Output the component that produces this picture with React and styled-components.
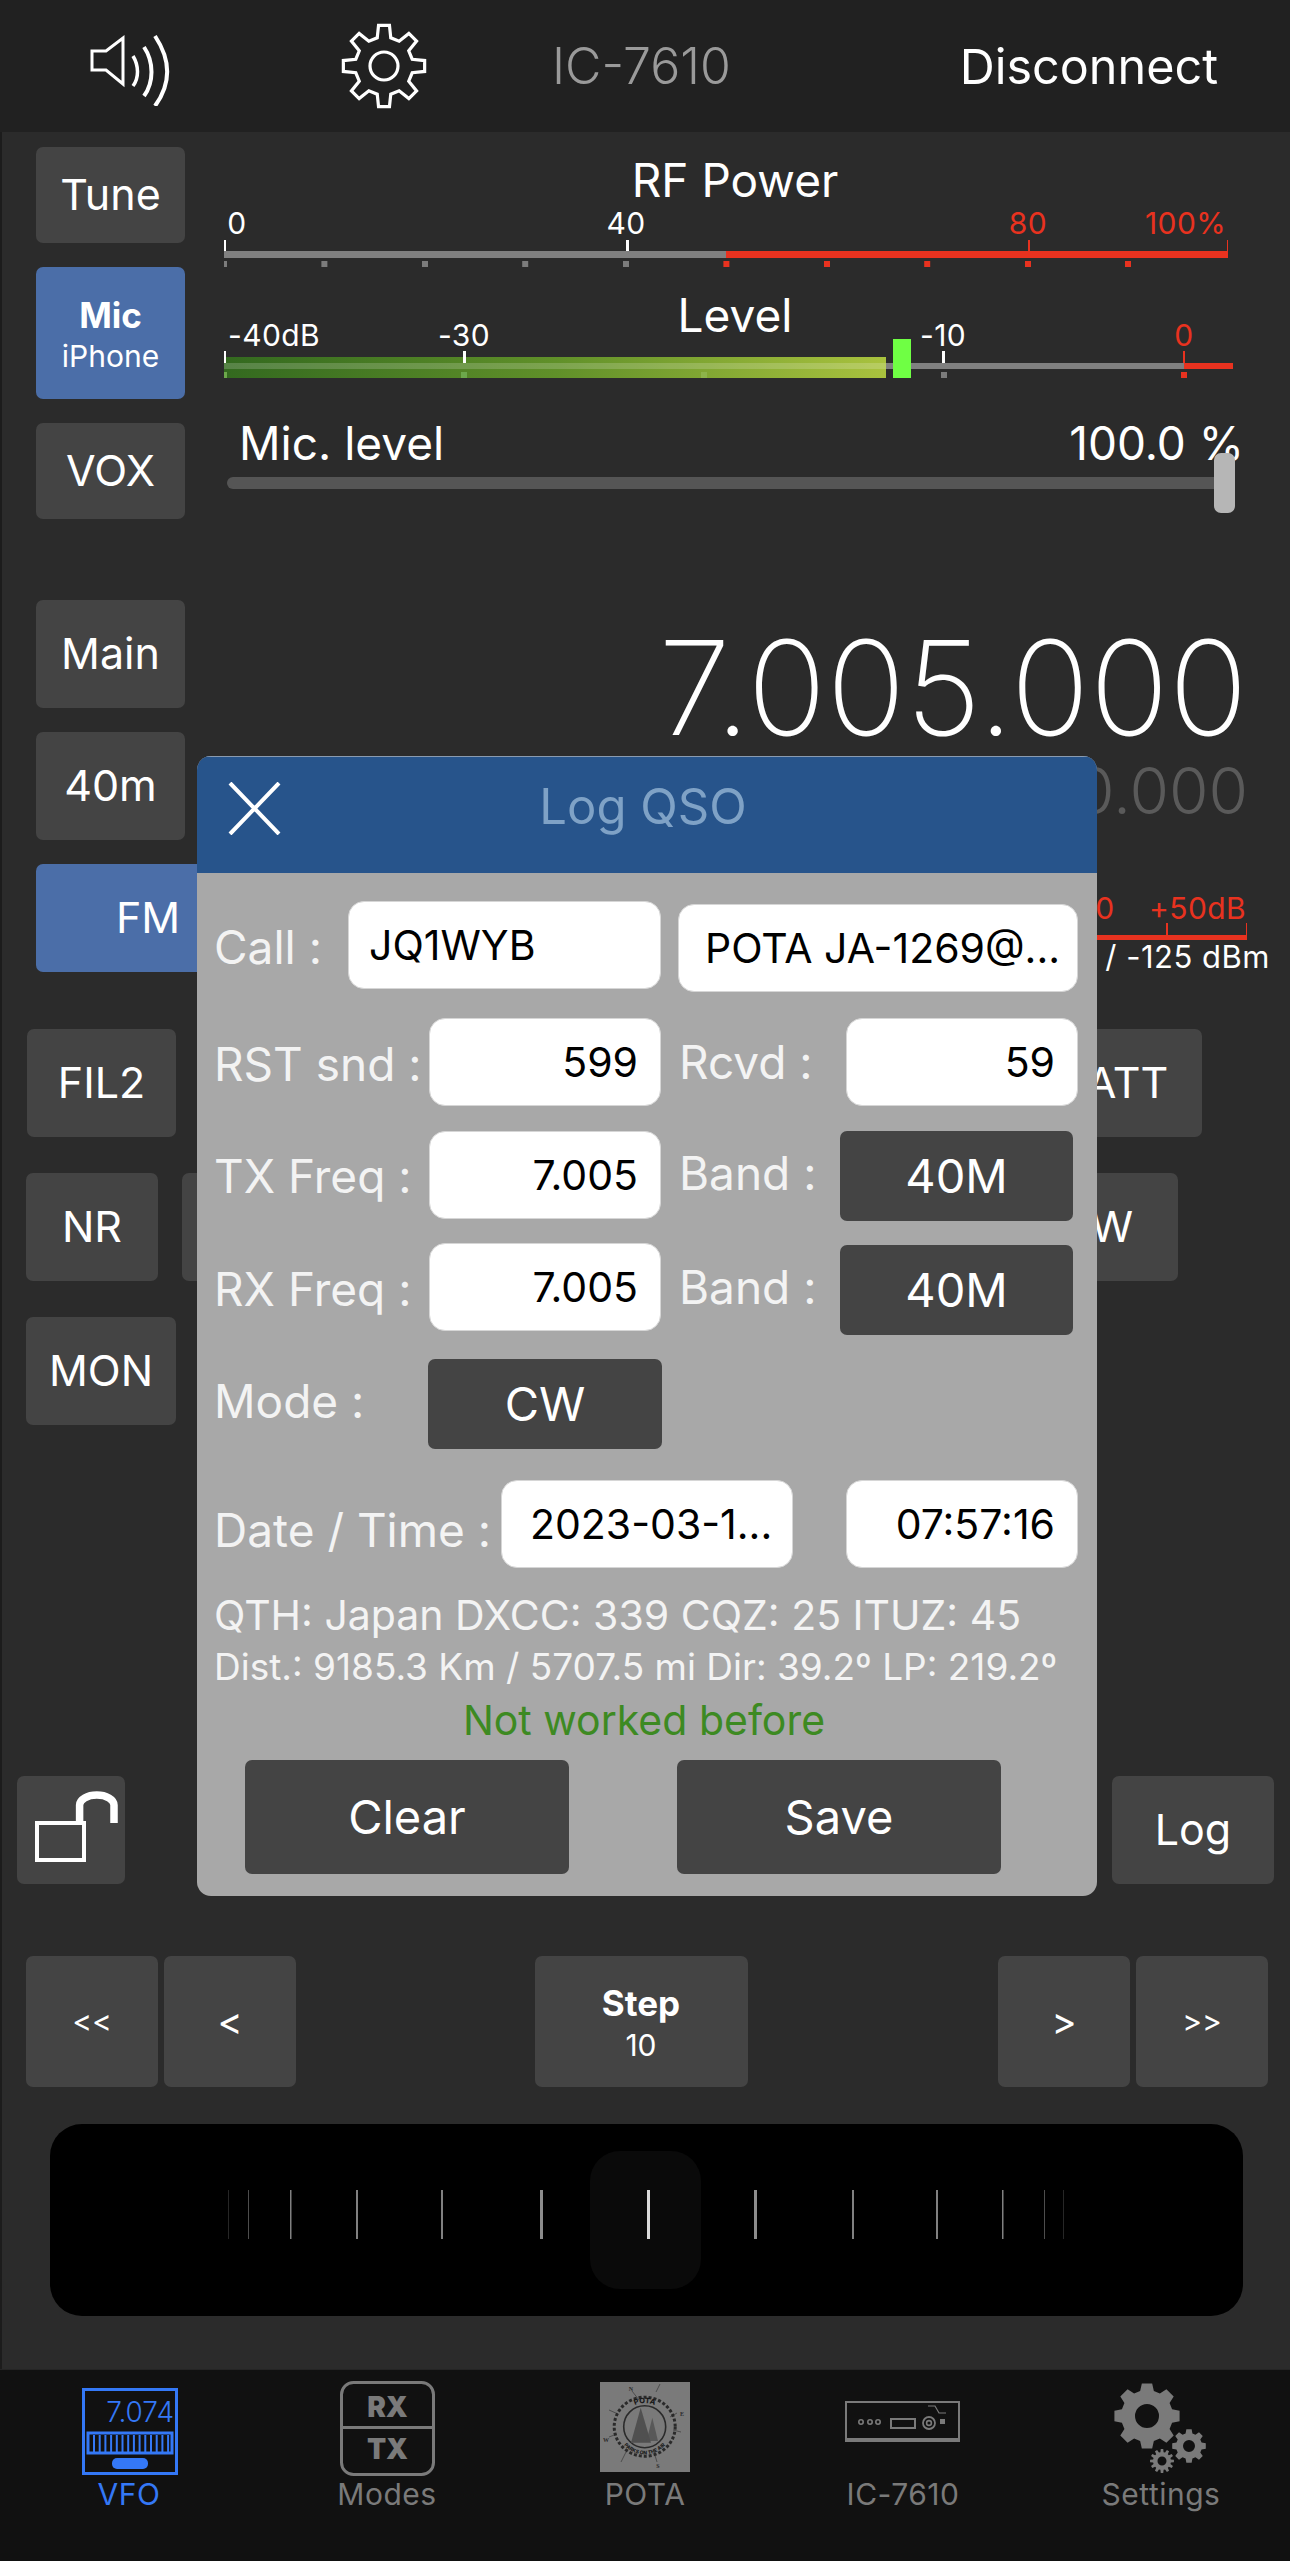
import React from "react";
import styled, { createGlobalStyle } from "styled-components";

const GlobalStyle = createGlobalStyle`
  html, body { margin: 0; padding: 0; background: #2b2b2b; }
  * { box-sizing: border-box; }
  body { font-family: Inter, "Liberation Sans", sans-serif; }
`;

const Page = styled.div`
  position: relative;
  width: 1290px;
  height: 2561px;
  display: flex;
  flex-direction: column;
  overflow: hidden;
  background: #2b2b2b;
  box-shadow: inset 2px 0 #1c1c1c;
  color: #fff;
`;

const TopBar = styled.header`
  height: 132px;
  flex: none;
  background: #212121;
  display: flex;
  align-items: center;
  padding-left: 90px;
  padding-right: 72px;
`;
const IconSlot = styled.div`
  width: ${(p) => p.$w}px;
  flex: none;
  display: flex;
`;
const DeviceName = styled.div`
  font-size: 50px;
  font-weight: 300;
  color: #9a9a9a;
  flex: 1;
`;
const Disconnect = styled.div`
  font-size: 48.5px;
  font-weight: 400;
  color: #fff;
`;

const Btn = styled.div`
  flex: none;
  width: ${(p) => p.$w}px;
  height: ${(p) => p.$h || 108}px;
  background: ${(p) => (p.$active ? "#4b6ea8" : "#444444")};
  border-radius: 7px;
  display: flex;
  flex-direction: column;
  align-items: center;
  justify-content: center;
  font-size: ${(p) => p.$size || 43}px;
  font-weight: 400;
  color: #fff;
  line-height: 1.1;
  margin-right: ${(p) => p.$mr || 0}px;
`;
const BtnStrong = styled.span`
  font-size: 35px;
  font-weight: 700;
  margin-top: 3px;
`;
const BtnSub = styled.span`
  font-size: 30px;
  font-weight: 400;
  margin-top: 6px;
`;

const MeterSection = styled.section`
  display: flex;
  padding: 15px 0 0 36px;
  height: 387px;
  flex: none;
`;
const SideButtons = styled.div`
  display: flex;
  flex-direction: column;
  gap: 24px;
  width: 149px;
  flex: none;
`;
const MeterColumn = styled.div`
  margin-left: 39px;
  padding-top: 8px;
  flex: 1;
  display: flex;
  flex-direction: column;
`;
const MeterTitle = styled.div`
  width: 1022px;
  height: 50px;
  line-height: 50px;
  text-align: center;
  font-size: 46px;
  font-weight: 400;
  margin-bottom: ${(p) => p.$mb || 0}px;
`;
const Scale = styled.div`
  position: relative;
  width: 1066px;
  height: ${(p) => p.$h}px;
  margin-bottom: ${(p) => p.$mb || 0}px;
  svg { position: absolute; left: 0; top: 0; }
`;
const ScaleLabel = styled.span`
  position: absolute;
  top: ${(p) => p.$top}px;
  left: ${(p) => p.$x}px;
  transform: ${(p) => (p.$start ? "none" : "translateX(-50%)")};
  font-size: 30px;
  line-height: 30px;
  letter-spacing: 0.4px;
  color: ${(p) => (p.$red ? "#e8321f" : "#fff")};
  white-space: nowrap;
`;

const SliderHead = styled.div`
  width: 1020px;
  height: 50px;
  padding-left: 15px;
  display: flex;
  justify-content: space-between;
  align-items: center;
  font-size: 46px;
`;
const SliderTrack = styled.div`
  position: relative;
  margin: 9px 0 0 3px;
  width: 993px;
  height: 12px;
  background: #555;
  border-radius: 6px;
`;
const SliderThumb = styled.div`
  position: absolute;
  right: -15px;
  top: -24px;
  width: 21px;
  height: 60px;
  background: #b6b6b6;
  border-radius: 7px;
`;

const VfoSection = styled.section`
  display: flex;
  padding: 81px 42px 0 36px;
  height: 453px;
  flex: none;
`;
const VfoButtons = styled.div`
  display: flex;
  flex-direction: column;
  gap: 24px;
  width: 224px;
  flex: none;
`;
const VfoReadout = styled.div`
  flex: 1;
  display: flex;
  flex-direction: column;
  align-items: flex-end;
  position: relative;
`;
const MainFreq = styled.div`
  margin-top: 24px;
  font-size: 131px;
  line-height: 128px;
  font-weight: 200;
`;
const SubFreq = styled.div`
  margin-top: 7px;
  font-size: 64px;
  line-height: 64px;
  font-weight: 300;
  color: #5a5a5a;
`;
const SMeter = styled.div`
  position: relative;
  width: 240px;
  margin-top: 70px;
  margin-right: 1px;
  height: 90px;
  svg { position: absolute; left: 0; top: 0; }
`;
const SReadout = styled.div`
  margin-top: -5px;
  margin-right: -22px;
  font-size: 31px;
  line-height: 30px;
  letter-spacing: 0.5px;
  white-space: nowrap;
`;

const ControlRow = styled.div`
  flex: none;
  display: flex;
  justify-content: space-between;
  padding: 0 ${(p) => p.$pr || 88}px 0 ${(p) => p.$pl || 26}px;
  margin-top: ${(p) => p.$mt}px;
`;
const BtnGroup = styled.div`
  display: flex;
  gap: ${(p) => p.$gap || 6}px;
`;

const Wheel = styled.div`
  flex: none;
  margin: 37px 47px 0 50px;
  height: 192px;
  background: #000;
  border-radius: 32px;
  position: relative;
  display: flex;
  justify-content: center;
  align-items: center;
  svg { position: absolute; left: 0; top: 0; }
`;
const WheelKnob = styled.div`
  width: 111px;
  height: 138px;
  margin-right: 3px;
  background: #0a0a0a;
  border-radius: 30px;
`;

const TabBar = styled.nav`
  margin-top: auto;
  height: 192px;
  flex: none;
  background: #111111;
  border-top: 1px solid #252525;
  display: grid;
  grid-template-columns: repeat(5, 1fr);
`;
const Tab = styled.div`
  display: flex;
  flex-direction: column;
  align-items: center;
  padding-top: 10px;
  color: ${(p) => (p.$active ? "#3478f6" : "#7a7a7a")};
`;
const TabLabel = styled.div`
  font-size: 30px;
  line-height: 36px;
  letter-spacing: 0.5px;
`;

const Modal = styled.div`
  position: absolute;
  left: 197px;
  top: 756px;
  width: 900px;
  height: 1140px;
  background: #a8a8a8;
  border-radius: 14px;
  overflow: hidden;
`;
const ModalHeader = styled.div`
  position: relative;
  height: 117px;
  background: #27548b;
  border-top: 1px solid #8a9bb0;
  display: flex;
  align-items: center;
  justify-content: center;
  padding-bottom: 18px;
`;
const ModalClose = styled.div`
  position: absolute;
  left: 31px;
  top: 25px;
  width: 53px;
  height: 53px;
`;
const ModalTitle = styled.div`
  font-size: 49px;
  font-weight: 400;
  color: #7fa2c6;
  margin-right: 8px;
`;
const ModalBody = styled.div`
  padding: 28px 0 0 17px;
`;
const FormRow = styled.div`
  display: flex;
  align-items: flex-start;
  height: ${(p) => p.$h}px;
  margin-top: ${(p) => p.$mt || 0}px;
`;
const FieldLabel = styled.div`
  flex: none;
  width: ${(p) => p.$w}px;
  height: ${(p) => p.$h || 88}px;
  line-height: ${(p) => p.$h || 88}px;
  margin-left: ${(p) => p.$ml || 0}px;
  padding-top: ${(p) => p.$dy || 0}px;
  font-size: 46px;
  color: #f3f3f3;
  white-space: nowrap;
`;
const Field = styled.div`
  flex: none;
  width: ${(p) => p.$w}px;
  height: ${(p) => p.$h || 88}px;
  margin-top: ${(p) => p.$dy || 0}px;
  margin-left: ${(p) => p.$ml || 0}px;
  background: #fff;
  border: 1px solid #d6d6d6;
  border-radius: 16px;
  display: flex;
  align-items: center;
  justify-content: ${(p) => (p.$right ? "flex-end" : "flex-start")};
  padding: 0 ${(p) => (p.$right ? 22 : 0)}px 0 ${(p) => (p.$right ? 0 : p.$pl || 20)}px;
  font-size: 41px;
  color: #000;
  white-space: nowrap;
`;
const PickBtn = styled(Btn)`
  margin-top: ${(p) => p.$dy || 0}px;
  font-size: 47px;
`;
const InfoLine = styled.div`
  font-size: ${(p) => p.$size}px;
  line-height: 52px;
  margin-top: ${(p) => p.$mt || 0}px;
  color: #f3f3f3;
  white-space: nowrap;
`;
const StatusLine = styled.div`
  font-size: 41px;
  line-height: 54px;
  color: #3d8a22;
  text-align: center;
  margin-left: -17px;
  padding-right: 6px;
`;
const ActionRow = styled.div`
  display: flex;
  gap: 108px;
  padding-left: 31px;
  margin-top: 13px;
`;

const gearPath = (cx, cy, ro, rr, n, inner = 0.17, base = 0.3) => {
  const p = (2 * Math.PI) / n;
  const pts = [];
  for (let i = 0; i < n; i++) {
    const a = -Math.PI / 2 + i * p;
    [[-base, rr], [-inner, ro], [inner, ro], [base, rr]].forEach(([o, r]) => {
      const t = a + o * p;
      pts.push(`${(cx + r * Math.cos(t)).toFixed(2)} ${(cy + r * Math.sin(t)).toFixed(2)}`);
    });
  }
  return "M" + pts.join("L") + "Z";
};
const holePath = (cx, cy, r) =>
  `M${cx - r} ${cy}a${r} ${r} 0 1 0 ${2 * r} 0a${r} ${r} 0 1 0 ${-2 * r} 0Z`;

const SpeakerIcon = () => (
  <svg width="90" height="80" viewBox="0 0 90 80" fill="none" stroke="#fff" strokeWidth="3">
    <path d="M2 17H16L33 4V50L16 36H2Z" transform="translate(0 8)" />
    <path d="M43 30C49 40 49 52 43 60" strokeWidth="3.5" />
    <path d="M54 21C64 36 64 56 54 70" strokeWidth="4" />
    <path d="M65 10C81 34 81 58 65 80" strokeWidth="4" />
  </svg>
);
const GearIcon = () => (
  <svg width="88" height="88" viewBox="0 0 88 88" fill="none" stroke="#fff" strokeWidth="3.2">
    <path d={gearPath(44, 44, 41, 29, 8)} strokeLinejoin="miter" />
    <circle cx="44" cy="44" r="14" />
  </svg>
);
const LockIcon = () => (
  <svg width="108" height="108" viewBox="0 0 108 108" fill="none" stroke="#fff">
    <rect x="20" y="47" width="47" height="37" strokeWidth="4" />
    <path d="M62.6 45V29A17.2 10 0 0 1 97 29V47" strokeWidth="7.5" />
  </svg>
);
const CloseIcon = () => (
  <svg width="53" height="53" viewBox="0 0 53 53" stroke="#fff" strokeWidth="4">
    <path d="M2 1L51 52M51 1L2 52" />
  </svg>
);

const FIRST = [0, 100.4, 201, 301.2, 402, 502.4, 603, 703.2, 804, 904, 1004];
const RfScale = () => (
  <svg width="1066" height="65">
    <rect x="0" y="46" width="502" height="7" fill="#808080" />
    <rect x="502" y="46" width="502" height="7" fill="#e8321f" />
    {[[0, 2], [402, 3]].map(([x, w]) => (
      <rect key={x} x={x} y="35" width={w} height="11" fill="#fff" />
    ))}
    {[[804, 2], [1003, 1]].map(([x, w]) => (
      <rect key={x} x={x} y="35" width={w} height="11" fill="#e8321f" />
    ))}
    {FIRST.slice(0, 10).map((x, i) => (
      <rect key={x} x={x - (i ? 3 : 0)} y="56" width={i ? 6 : 3} height="6" fill={i <= 4 ? "#7c7c7c" : "#e8321f"} />
    ))}
  </svg>
);
const LevelScale = () => (
  <svg width="1066" height="60">
    <defs>
      <linearGradient id="lvl" x1="0" x2="1" y1="0" y2="0">
        <stop offset="0" stopColor="#33691f" />
        <stop offset="0.5" stopColor="#609029" />
        <stop offset="1" stopColor="#a9c23e" />
      </linearGradient>
    </defs>
    <rect x="0" y="43" width="1009" height="6" fill="#808080" />
    <rect x="960" y="43" width="49" height="6" fill="#e8321f" />
    <rect x="0" y="37" width="662" height="21" fill="url(#lvl)" />
    <rect x="0" y="43" width="662" height="6" fill="#fff" opacity="0.18" />
    <rect x="0" y="31" width="2" height="12" fill="#fff" />
    <rect x="239" y="31" width="3" height="12" fill="#fff" />
    <rect x="718" y="31" width="3" height="12" fill="#fff" />
    <rect x="959" y="31" width="2" height="12" fill="#e8321f" />
    <rect x="0" y="52" width="3" height="6" fill="#6ca84b" />
    <rect x="237" y="52" width="6" height="6" fill="#6ca84b" />
    <rect x="477" y="52" width="6" height="6" fill="#8db44a" />
    <rect x="717" y="52" width="6" height="6" fill="#7c7c7c" />
    <rect x="957" y="52" width="6" height="6" fill="#e8321f" />
    <rect x="669" y="19" width="18" height="39" fill="#6fff44" />
  </svg>
);
const SScale = () => (
  <svg width="240" height="60">
    <rect x="0" y="42" width="240" height="5" fill="#e8321f" />
    <rect x="159" y="30" width="2" height="12" fill="#e8321f" />
    <rect x="239" y="30" width="1" height="12" fill="#e8321f" />
  </svg>
);

const TICKS = [
  [228, 0.15, 1], [248, 0.3, 1], [290, 0.5, 1.5], [356, 0.5, 2], [441, 0.5, 2], [540, 0.55, 3],
  [647, 0.85, 3], [754, 0.55, 3], [852, 0.5, 2], [936, 0.5, 2], [1002, 0.5, 1.5], [1044, 0.3, 1], [1063, 0.15, 1],
];
const WheelTicks = () => (
  <svg width="1193" height="192">
    {TICKS.map(([x, o, w]) => (
      <rect key={x} x={x - 50} y="66" width={w} height="49" fill="#fff" opacity={o} />
    ))}
  </svg>
);

const BLUE = "#3478f6";
const GREY = "#7a7a7a";
const VfoTabIcon = () => (
  <svg width="120" height="96" viewBox="0 0 120 96">
    <rect x="14.5" y="9.5" width="93" height="84" fill="none" stroke={BLUE} strokeWidth="3" />
    <text x="105" y="42" textAnchor="end" fontSize="28" fontWeight="300" fill={BLUE} fontFamily="Inter">7.074</text>
    <rect x="19" y="53" width="84" height="20" fill="none" stroke={BLUE} strokeWidth="3" />
    {Array.from({ length: 14 }, (_, i) => (
      <rect key={i} x={24 + i * 5.7} y="55" width="2" height="17" fill={BLUE} />
    ))}
    <rect x="43" y="78" width="36" height="11" rx="5" fill={BLUE} />
  </svg>
);
const ModesTabIcon = () => (
  <svg width="120" height="96" viewBox="0 0 120 96">
    <rect x="14.5" y="2.5" width="92" height="92" rx="12" fill="none" stroke={GREY} strokeWidth="3" />
    <rect x="14" y="46" width="93" height="3" fill={GREY} />
    <text x="60.5" y="37" textAnchor="middle" fontSize="28" fontWeight="900" fill={GREY} fontFamily="Inter">RX</text>
    <text x="60.5" y="79" textAnchor="middle" fontSize="28" fontWeight="900" fill={GREY} fontFamily="Inter">TX</text>
  </svg>
);
const COMPASS = [
  [47, 11, 54, 20], [75, 4, 71, 12], [92, 33, 85, 37], [96, 52, 88, 50],
  [72, 82, 69, 72], [36, 82, 41, 72], [24, 57, 32, 54], [24, 30, 33, 34],
];
const PotaTabIcon = () => (
  <svg width="120" height="96" viewBox="0 0 120 96">
    <rect x="15" y="2" width="90" height="90" fill="#7a7a7a" />
    <g fill="none" stroke="#2a2a2a">
      <ellipse cx="59.7" cy="46.7" rx="30.5" ry="29.5" strokeWidth="3" strokeDasharray="3 2" />
      <ellipse cx="59.7" cy="46.7" rx="21" ry="21" strokeWidth="1.6" />
      {COMPASS.map(([a, b, c, d]) => (
        <line key={a + "-" + b} x1={a} y1={b} x2={c} y2={d} strokeWidth="0.8" opacity="0.7" />
      ))}
    </g>
    <g fill="#505050">
      <path d="M55.7 27.7L66 62.7H46Z" />
      <path d="M67.3 37.7L73 61H61.5Z" opacity="0.8" />
    </g>
    <defs>
      <path id="potaTop" d="M36 46.7A23.7 23.7 0 0 1 83.4 46.7" />
      <path id="potaBottom" d="M32 46.7A27.7 27.7 0 0 0 87.4 46.7" />
    </defs>
    <text fontSize="7.5" fontWeight="800" fill="#1a1a1a" fontFamily="Inter">
      <textPath href="#potaTop" startOffset="50%" textAnchor="middle">POTA</textPath>
    </text>
    <text fontSize="5" fontWeight="800" fill="#1a1a1a" fontFamily="Inter">
      <textPath href="#potaBottom" startOffset="50%" textAnchor="middle">PARKS ON THE AIR</textPath>
    </text>
    <g fontSize="6" fontWeight="700" fill="#2a2a2a" fontFamily="Liberation Serif" textAnchor="middle">
      <text x="46" y="11">N</text>
      <text x="97" y="36">E</text>
      <text x="73" y="88">S</text>
      <text x="21" y="62">W</text>
    </g>
  </svg>
);
const RigTabIcon = () => (
  <svg width="120" height="96" viewBox="0 0 120 96" fill="none" stroke={GREY}>
    <rect x="3" y="22" width="113" height="39" strokeWidth="2" />
    <rect x="2" y="58" width="115" height="3.5" fill={GREY} stroke="none" />
    <circle cx="18" cy="42" r="2.2" strokeWidth="1.6" />
    <circle cx="27" cy="42" r="2.2" strokeWidth="1.6" />
    <circle cx="35" cy="42" r="2.2" strokeWidth="1.6" />
    <rect x="48" y="39" width="24" height="9" strokeWidth="2" />
    <circle cx="86" cy="43" r="6" strokeWidth="1.8" />
    <circle cx="86" cy="43" r="2.4" strokeWidth="1.6" />
    <rect x="97" y="39" width="5" height="5" fill={GREY} stroke="none" />
    <path d="M85 26H92L96 33H103" strokeWidth="1.2" />
  </svg>
);
const SettingsTabIcon = () => (
  <svg width="120" height="96" viewBox="0 0 120 96" fill={GREY} fillRule="evenodd">
    <path d={gearPath(46, 36, 33, 26, 8, 0.2, 0.34) + holePath(46, 36, 12)} />
    <path d={gearPath(88, 66, 17, 13, 8, 0.2, 0.34) + holePath(88, 66, 6)} />
    <path d={gearPath(61, 81, 12, 9, 12, 0.2, 0.34) + holePath(61, 81, 4.5)} />
  </svg>
);

const App = () => (
  <Page>
    <GlobalStyle />
    <TopBar>
      <IconSlot $w={250}><SpeakerIcon /></IconSlot>
      <IconSlot $w={212}><GearIcon /></IconSlot>
      <DeviceName>IC-7610</DeviceName>
      <Disconnect>Disconnect</Disconnect>
    </TopBar>

    <MeterSection>
      <SideButtons>
        <Btn $w={149} $h={96}>Tune</Btn>
        <Btn $w={149} $h={132} $active><BtnStrong>Mic</BtnStrong><BtnSub>iPhone</BtnSub></Btn>
        <Btn $w={149} $h={96}>VOX</Btn>
      </SideButtons>
      <MeterColumn>
        <MeterTitle>RF Power</MeterTitle>
        <Scale $h={65} $mb={20}>
          <RfScale />
          <ScaleLabel $top={3} $x={13}>0</ScaleLabel>
          <ScaleLabel $top={3} $x={402}>40</ScaleLabel>
          <ScaleLabel $top={3} $x={804} $red>80</ScaleLabel>
          <ScaleLabel $top={3} $x={921} $start $red>100%</ScaleLabel>
        </Scale>
        <MeterTitle $mb={-20}>Level</MeterTitle>
        <Scale $h={60} $mb={38}>
          <LevelScale />
          <ScaleLabel $top={0} $x={4} $start>-40dB</ScaleLabel>
          <ScaleLabel $top={0} $x={240}>-30</ScaleLabel>
          <ScaleLabel $top={0} $x={719}>-10</ScaleLabel>
          <ScaleLabel $top={0} $x={960} $red>0</ScaleLabel>
        </Scale>
        <SliderHead>
          <span>Mic. level</span>
          <span>100.0 %</span>
        </SliderHead>
        <SliderTrack><SliderThumb /></SliderTrack>
      </MeterColumn>
    </MeterSection>

    <VfoSection>
      <VfoButtons>
        <Btn $w={149}>Main</Btn>
        <Btn $w={149}>40m</Btn>
        <Btn $w={224} $active>FM</Btn>
      </VfoButtons>
      <VfoReadout>
        <MainFreq>7.005.000</MainFreq>
        <SubFreq>0.000</SubFreq>
        <SMeter>
          <SScale />
          <ScaleLabel $top={0} $x={98} $red>0</ScaleLabel>
          <ScaleLabel $top={0} $x={142} $red $start>+50dB</ScaleLabel>
        </SMeter>
        <SReadout>/ -125 dBm</SReadout>
      </VfoReadout>
    </VfoSection>

    <ControlRow $mt={57} $pr={88} $pl={27}>
      <Btn $w={149}>FIL2</Btn>
      <Btn $w={149}>ATT</Btn>
    </ControlRow>
    <ControlRow $mt={36} $pr={112}>
      <BtnGroup $gap={24}>
        <Btn $w={132}>NR</Btn>
        <Btn $w={132} />
      </BtnGroup>
      <Btn $w={132}>W</Btn>
    </ControlRow>
    <ControlRow $mt={36}>
      <Btn $w={150}>MON</Btn>
    </ControlRow>
    <ControlRow $mt={351} $pl={17} $pr={16}>
      <Btn $w={108}><LockIcon /></Btn>
      <Btn $w={162}>Log</Btn>
    </ControlRow>
    <ControlRow $mt={72} $pr={22}>
      <BtnGroup>
        <Btn $w={132} $h={131} $size={30}>&lt;&lt;</Btn>
        <Btn $w={132} $h={131} $size={38}>&lt;</Btn>
      </BtnGroup>
      <Btn $w={213} $h={131} $mr={12}>
        <BtnStrong>Step</BtnStrong>
        <BtnSub>10</BtnSub>
      </Btn>
      <BtnGroup>
        <Btn $w={132} $h={131} $size={38}>&gt;</Btn>
        <Btn $w={132} $h={131} $size={30}>&gt;&gt;</Btn>
      </BtnGroup>
    </ControlRow>
    <Wheel>
      <WheelTicks />
      <WheelKnob />
    </Wheel>

    <TabBar>
      <Tab $active><VfoTabIcon /><TabLabel>VFO</TabLabel></Tab>
      <Tab><ModesTabIcon /><TabLabel>Modes</TabLabel></Tab>
      <Tab><PotaTabIcon /><TabLabel>POTA</TabLabel></Tab>
      <Tab><RigTabIcon /><TabLabel>IC-7610</TabLabel></Tab>
      <Tab><SettingsTabIcon /><TabLabel>Settings</TabLabel></Tab>
    </TabBar>

    <Modal>
      <ModalHeader>
        <ModalClose><CloseIcon /></ModalClose>
        <ModalTitle>Log QSO</ModalTitle>
      </ModalHeader>
      <ModalBody>
        <FormRow $h={91}>
          <FieldLabel $w={134} $dy={2}>Call :</FieldLabel>
          <Field $w={313}>JQ1WYB</Field>
          <Field $w={400} $ml={17} $dy={3} $pl={26}>POTA JA-1269@...</Field>
        </FormRow>
        <FormRow $h={88} $mt={26}>
          <FieldLabel $w={215} $dy={2}>RST snd :</FieldLabel>
          <Field $w={232} $right>599</Field>
          <FieldLabel $w={167} $ml={18}>Rcvd :</FieldLabel>
          <Field $w={232} $right>59</Field>
        </FormRow>
        <FormRow $h={90} $mt={25}>
          <FieldLabel $w={215} $dy={1}>TX Freq :</FieldLabel>
          <Field $w={232} $right>7.005</Field>
          <FieldLabel $w={161} $ml={18} $h={84}>Band :</FieldLabel>
          <PickBtn $w={233} $h={90}>40M</PickBtn>
        </FormRow>
        <FormRow $h={92} $mt={22}>
          <FieldLabel $w={215} $dy={2}>RX Freq :</FieldLabel>
          <Field $w={232} $right>7.005</Field>
          <FieldLabel $w={161} $ml={18}>Band :</FieldLabel>
          <PickBtn $w={233} $h={90} $dy={2}>40M</PickBtn>
        </FormRow>
        <FormRow $h={90} $mt={24}>
          <FieldLabel $w={214} $h={84}>Mode :</FieldLabel>
          <PickBtn $w={234} $h={90}>CW</PickBtn>
        </FormRow>
        <FormRow $h={88} $mt={31}>
          <FieldLabel $w={287} $dy={6}>Date / Time :</FieldLabel>
          <Field $w={292} $pl={28}>2023-03-1...</Field>
          <Field $w={232} $ml={53} $right>07:57:16</Field>
        </FormRow>
        <InfoLine $size={41} $mt={21}>QTH: Japan DXCC: 339 CQZ: 25 ITUZ: 45</InfoLine>
        <InfoLine $size={37}>Dist.: 9185.3 Km / 5707.5 mi Dir: 39.2º LP: 219.2º</InfoLine>
        <StatusLine>Not worked before</StatusLine>
        <ActionRow>
          <Btn $w={324} $h={114} $size={47}>Clear</Btn>
          <Btn $w={324} $h={114} $size={47}>Save</Btn>
        </ActionRow>
      </ModalBody>
    </Modal>
  </Page>
);

export default App;
